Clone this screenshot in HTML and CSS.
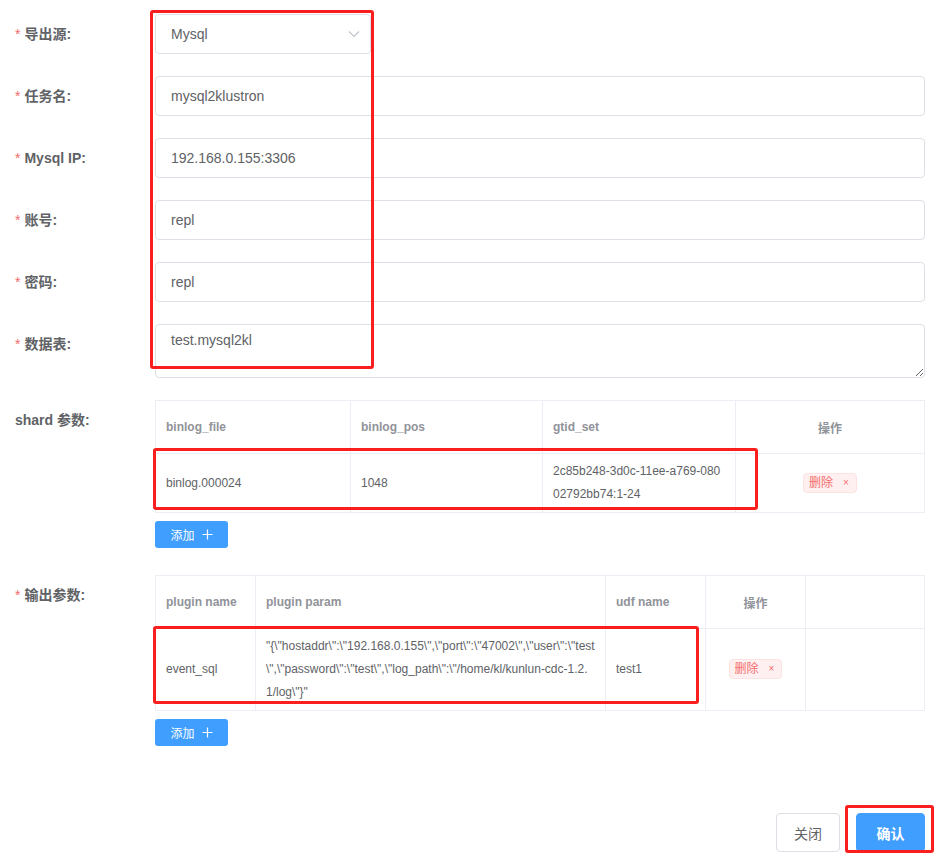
FILE: index.html
```html
<!DOCTYPE html>
<html lang="zh-CN">
<head>
<meta charset="utf-8">
<title>导出任务</title>
<link rel="stylesheet" href="styles.css">
</head>
<body>
<div class="page">
  <form class="form">
    <div class="item">
      <label class="label"><span class="req">*</span>导出源:</label>
      <div class="control">
        <div class="select">
          <span>Mysql</span>
          <svg class="chev" width="12" height="8" viewBox="0 0 12 8"><path d="M1 1.5 L6 6.5 L11 1.5" fill="none" stroke="#c0c4cc" stroke-width="1.2"/></svg>
        </div>
      </div>
    </div>
    <div class="item">
      <label class="label"><span class="req">*</span>任务名:</label>
      <div class="control"><div class="input">mysql2klustron</div></div>
    </div>
    <div class="item">
      <label class="label"><span class="req">*</span>Mysql IP:</label>
      <div class="control"><div class="input">192.168.0.155:3306</div></div>
    </div>
    <div class="item">
      <label class="label"><span class="req">*</span>账号:</label>
      <div class="control"><div class="input">repl</div></div>
    </div>
    <div class="item">
      <label class="label"><span class="req">*</span>密码:</label>
      <div class="control"><div class="input">repl</div></div>
    </div>
    <div class="item">
      <label class="label"><span class="req">*</span>数据表:</label>
      <div class="control"><textarea class="textarea">test.mysql2kl</textarea></div>
    </div>
    <div class="item">
      <label class="label">shard 参数:</label>
      <div class="control">
        <table class="tbl">
          <colgroup><col style="width:195px"><col style="width:192px"><col style="width:193px"><col></colgroup>
          <thead>
            <tr><th>binlog_file</th><th>binlog_pos</th><th>gtid_set</th><th class="center">操作</th></tr>
          </thead>
          <tbody>
            <tr>
              <td>binlog.000024</td>
              <td>1048</td>
              <td>2c85b248-3d0c-11ee-a769-080<br>02792bb74:1-24</td>
              <td class="center"><span class="tag">删除<span class="x">×</span></span></td>
            </tr>
          </tbody>
        </table>
        <button type="button" class="btn-add">添加<svg width="11" height="11" viewBox="0 0 11 11"><path d="M5.5 0.5 V10.5 M0.5 5.5 H10.5" stroke="#fff" stroke-width="1.2"/></svg></button>
      </div>
    </div>
    <div class="item item-out">
      <label class="label"><span class="req">*</span>输出参数:</label>
      <div class="control">
        <table class="tbl">
          <colgroup><col style="width:100px"><col style="width:350px"><col style="width:100px"><col style="width:100px"><col></colgroup>
          <thead>
            <tr><th>plugin name</th><th>plugin param</th><th>udf name</th><th class="center">操作</th><th class="blank" rowspan="2"></th></tr>
          </thead>
          <tbody>
            <tr>
              <td>event_sql</td>
              <td>"{\"hostaddr\":\"192.168.0.155\",\"port\":\"47002\",\"user\":\"test<br>\",\"password\":\"test\",\"log_path\":\"/home/kl/kunlun-cdc-1.2.<br>1/log\"}"</td>
              <td>test1</td>
              <td class="center"><span class="tag">删除<span class="x">×</span></span></td>
            </tr>
          </tbody>
        </table>
        <button type="button" class="btn-add">添加<svg width="11" height="11" viewBox="0 0 11 11"><path d="M5.5 0.5 V10.5 M0.5 5.5 H10.5" stroke="#fff" stroke-width="1.2"/></svg></button>
      </div>
    </div>
  </form>
  <div class="footer">
    <button type="button" class="btn btn-close">关闭</button>
    <button type="button" class="btn btn-ok">确认</button>
  </div>

  <div class="mark mark-1"></div>
  <div class="mark mark-2"></div>
  <div class="mark mark-3"></div>
  <div class="mark mark-4"></div>
</div>
</body>
</html>
```
FILE: styles.css
```css
* { box-sizing: border-box; }
html, body { margin: 0; padding: 0; background: #fff; }
body {
  font-family: "Liberation Sans", "Noto Sans CJK SC", sans-serif;
  color: #606266;
}
.page {
  position: relative;
  width: 937px;
  height: 865px;
  padding-top: 14px;
}
.form { display: flex; flex-direction: column; }
.item {
  display: grid;
  grid-template-columns: 155px 770px;
  margin-bottom: 22px;
}
.item-out { margin-top: 5px; }
.label {
  padding-left: 15px;
  line-height: 40px;
  font-size: 14px;
  font-weight: bold;
  color: #606266;
}
.req { color: #f56c6c; margin-right: 4px; font-weight: normal; }
.control { display: flex; flex-direction: column; align-items: flex-start; }
.select, .input {
  height: 40px;
  border: 1px solid #dcdfe6;
  border-radius: 4px;
  padding: 0 15px;
  font-size: 14px;
  line-height: 38px;
  color: #606266;
  background: #fff;
}
.select {
  width: 216px;
  display: flex;
  justify-content: space-between;
  align-items: center;
}
.chev { margin-right: -5px; }
.input { width: 770px; }
.textarea {
  display: block;
  width: 770px;
  height: 54px;
  border: 1px solid #dcdfe6;
  border-radius: 4px;
  padding: 5px 15px;
  font-family: inherit;
  font-size: 14px;
  line-height: 21px;
  color: #606266;
  resize: vertical;
  margin: 0;
}
.tbl {
  width: 770px;
  border-collapse: collapse;
  table-layout: fixed;
  border: 1px solid #ebeef5;
  font-size: 12px;
}
.tbl th, .tbl td {
  border: 1px solid #ebeef5;
  padding: 0 10px;
  text-align: left;
}
.tbl th {
  height: 53px;
  font-weight: bold;
  color: #909399;
  vertical-align: middle;
}
.tbl td {
  padding-top: 6px;
  padding-bottom: 6px;
  line-height: 23px;
  color: #606266;
  vertical-align: middle;
  word-break: break-all;
}
.tbl .center { text-align: center; }
.tbl .blank { padding: 0; }
.tag {
  display: inline-flex;
  align-items: center;
  height: 20px;
  padding: 0 7px 0 5px;
  border: 1px solid #fde2e2;
  border-radius: 4px;
  background: #fef0f0;
  color: #f56c6c;
  font-size: 12px;
  line-height: 18px;
}
.tag .x { margin-left: 10px; font-size: 10px; }
.btn-add {
  margin-top: 8px;
  width: 73px;
  height: 27px;
  border: none;
  border-radius: 3px;
  background: #409eff;
  color: #fff;
  font-family: inherit;
  font-size: 12px;
  display: inline-flex;
  align-items: center;
  justify-content: center;
  gap: 7px;
  padding: 0;
}
.footer {
  display: flex;
  justify-content: flex-end;
  gap: 16px;
  width: 925px;
  margin-top: 45px;
}
.btn {
  height: 39px;
  border-radius: 4px;
  font-family: inherit;
  font-size: 14px;
  padding: 0;
}
.btn-close {
  width: 64px;
  border: 1px solid #dcdfe6;
  background: #fff;
  color: #606266;
}
.btn-ok {
  width: 69px;
  border: 1px solid #409eff;
  background: #409eff;
  color: #fff;
  font-weight: bold;
}
.mark {
  position: absolute;
  border: 3px solid #fa1e1e;
  border-radius: 3px;
  pointer-events: none;
}
.mark-1 { left: 150px; top: 10px; width: 224px; height: 359px; }
.mark-2 { left: 153px; top: 448px; width: 605px; height: 62px; }
.mark-3 { left: 153px; top: 626px; width: 546px; height: 78px; }
.mark-4 { left: 845px; top: 805px; width: 89px; height: 48px; }
```
